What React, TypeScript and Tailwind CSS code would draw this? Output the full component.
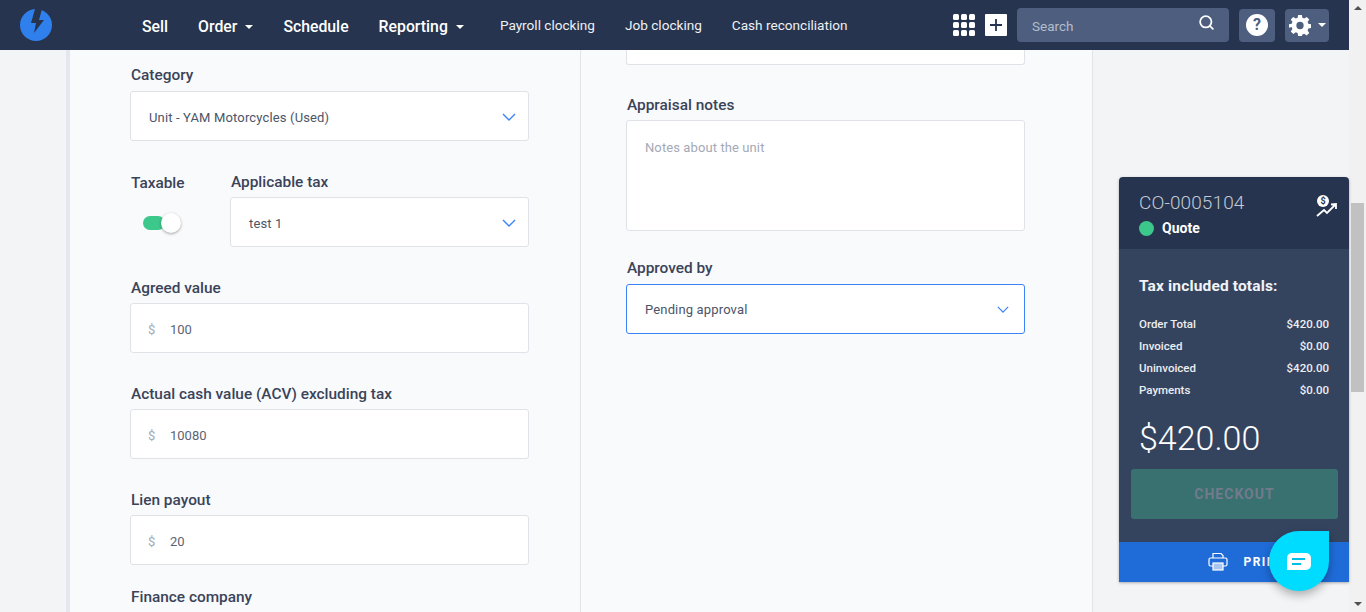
import React from "react";
import { Search } from "lucide-react";

const Caret = () => (
  <span className="ml-2 inline-block w-0 h-0 border-x-4 border-x-transparent border-t-4 border-t-white" />
);

const Label = ({ children }: { children: React.ReactNode }) => (
  <div className="h-5 leading-5 mb-[5px] pl-px text-[15.4px] font-medium text-[#3a4459] whitespace-nowrap">
    {children}
  </div>
);

const SelectBox = ({ value, focus }: { value: string; focus?: boolean }) => (
  <div
    className={`h-[50px] flex items-center justify-between pl-[18px] bg-white rounded-[3px] border ${
      focus ? "border-[#3b82f6] pr-[15px]" : "border-[#e0e2e8] pr-[12px]"
    }`}
  >
    <span className={`text-[13px] text-[#4b5568] tracking-[0.15px] ${focus ? "pt-[2px]" : "pt-[4px]"}`}>{value}</span>
    <svg
      viewBox="0 0 14 8"
      className={focus ? "w-[12px] h-[7px] shrink-0" : "w-[14px] h-[8px] mt-[2px] shrink-0"}
      fill="none"
      stroke="#3b82f6"
      strokeWidth="1.4"
    >
      <path d="M1 1l6 6 6-6" />
    </svg>
  </div>
);

const MoneyInput = ({ value }: { value: string }) => (
  <div className="h-[50px] flex items-center pl-[17px] pt-[4px] bg-white rounded-[3px] border border-[#e0e2e8] text-[13px]">
    <span className="w-[22px] text-[#a4a9b6]">$</span>
    <span className="text-[#5b6474]">{value}</span>
  </div>
);

const Row = ({ label, value }: { label: string; value: string }) => (
  <div className="h-[22px] flex items-center justify-between text-[11.5px] font-medium text-[#eceef2]">
    <span>{label}</span>
    <span>{value}</span>
  </div>
);

export default function App() {
  return (
    <div className="flex h-[612px] w-full overflow-hidden bg-[#f3f4f6] font-['Roboto',sans-serif]">
      <div className="flex-1 min-w-0 flex flex-col relative">
        {/* top nav */}
        <nav className="h-[50px] shrink-0 bg-[#26344f] flex items-center text-white">
          <svg viewBox="0 0 32 32" className="ml-[20px] w-8 h-8 shrink-0">
            <circle cx="16" cy="16" r="16" fill="#2f80ed" />
            <path d="M15 0 L22 0 L19 11 L24 11 L14 24 L16 14 L11 14 Z" fill="#26344f" />
          </svg>
          <div className="ml-[90px] pt-[4px] flex items-center text-[15.8px] font-medium">
            <span>Sell</span>
            <span className="ml-[30px] flex items-center">Order<Caret /></span>
            <span className="ml-[30px]">Schedule</span>
            <span className="ml-[30px] flex items-center">Reporting<Caret /></span>
          </div>
          <div className="ml-[36px] flex items-center gap-[30px] text-[13.6px] text-[#eef0f4]">
            <span>Payroll clocking</span>
            <span>Job clocking</span>
            <span>Cash reconciliation</span>
          </div>
          <div className="ml-auto mr-[20px] flex items-center">
            <div className="grid grid-cols-3 gap-[2px] w-[22px]">
              {[0, 1, 2, 3, 4, 5, 6, 7, 8].map((i) => (
                <span key={i} className="w-[6px] h-[6px] rounded-[1.5px] bg-white" />
              ))}
            </div>
            <div className="ml-[10px] w-[22px] h-[22px] bg-white rounded-[1px] flex items-center justify-center">
              <svg viewBox="0 0 14 14" className="w-[14px] h-[14px]">
                <path d="M7 1v12M1 7h12" stroke="#26344f" strokeWidth="1.8" />
              </svg>
            </div>
            <div className="ml-[10px] w-[212px] h-[34px] rounded-[4px] bg-[#4d5e7f] flex items-center justify-between pl-[15px] pr-[14px]">
              <span className="pt-[2px] text-[13.5px] text-[#b4bccb]">Search</span>
              <Search className="w-[17px] h-[17px] text-white -mt-[5px]" strokeWidth={2.5} />
            </div>
            <div className="ml-[10px] w-[36px] h-[33px] rounded-[4px] bg-[#4d5e7f] flex items-center justify-center">
              <span className="w-[22px] h-[22px] rounded-full bg-white flex items-center justify-center text-[16px] font-bold text-[#4d5e7f]">
                ?
              </span>
            </div>
            <div className="ml-[10px] w-[44px] h-[33px] rounded-[4px] bg-[#4d5e7f] flex items-center pl-[4px]">
              <svg viewBox="0 0 24 24" className="w-[22px] h-[22px]" fill="white">
                <path
                  fillRule="evenodd"
                  d="M10 1h4l.6 3.2 2 .8L19.3 3.2l2.8 2.8-1.8 2.7.8 2 3.2.6v4l-3.2.6-.8 2 1.8 2.7-2.8 2.8-2.7-1.8-2 .8L14 24h-4l-.6-3.2-2-.8-2.7 1.8-2.8-2.8 1.8-2.7-.8-2L0 15.100v-4l2.900-.6.8-2-1.800-2.500 2.800-2.800 2.700 1.800 2-.8z M12 8.500a4 4 0 1 0 0 8 4 4 0 0 0 0-8z"
                />
              </svg>
              <span className="ml-[7px] w-0 h-0 border-x-[4px] border-x-transparent border-t-[4px] border-t-white" />
            </div>
          </div>
        </nav>

        {/* body */}
        <div className="flex-1 min-h-0 flex">
          <div className="w-[66px] shrink-0" />
          <div className="w-[1027px] shrink-0 flex bg-[#f9fafc] border-l-4 border-l-[#e6e6f0] border-r border-r-[#e2e4e9]">
            <div className="w-[511px] shrink-0 pl-[60px] pr-[51px] pt-[15px] flex flex-col border-r border-r-[#e2e4e9]">
              <div>
                <div className="pb-px">
                  <Label>Category</Label>
                </div>
                <SelectBox value="Unit - YAM Motorcycles (Used)" />
              </div>
              <div className="flex mt-[31px]">
                <div className="w-[100px] shrink-0">
                  <div className="pt-[1px]">
                    <Label>Taxable</Label>
                  </div>
                  <div className="relative mt-[23px] ml-[13px] w-[22px] h-[14px] rounded-full bg-[#3cc88b]">
                    <span className="absolute -top-[3px] left-[18px] w-5 h-5 rounded-full bg-white shadow-[0_1px_3px_rgba(0,0,0,0.35)]" />
                  </div>
                </div>
                <div className="flex-1">
                  <Label>Applicable tax</Label>
                  <SelectBox value="test 1" />
                </div>
              </div>
              <div className="mt-[31px]">
                <Label>Agreed value</Label>
                <MoneyInput value="100" />
              </div>
              <div className="mt-[31px]">
                <Label>Actual cash value (ACV) excluding tax</Label>
                <MoneyInput value="10080" />
              </div>
              <div className="mt-[31px]">
                <Label>Lien payout</Label>
                <MoneyInput value="20" />
              </div>
              <div className="mt-[22px]">
                <Label>Finance company</Label>
              </div>
            </div>
            <div className="flex-1 pl-[45px] pr-[67px]">
              <div className="h-[15px] bg-white border border-t-0 border-[#e0e2e8] rounded-b-[3px]" />
              <div className="mt-[30px]">
                <Label>Appraisal notes</Label>
                <div className="h-[111px] bg-white border border-[#e0e2e8] rounded-[3px] px-[18px] pt-[18px] text-[13px] tracking-[0.1px] leading-[18px] text-[#a4a9b6]">
                  Notes about the unit
                </div>
              </div>
              <div className="mt-[27px]">
                <div className="pb-px">
                  <Label>Approved by</Label>
                </div>
                <SelectBox value="Pending approval" focus />
              </div>
            </div>
          </div>

          {/* order card */}
          <div className="ml-[26px] mt-[127px] w-[230px] h-[405px] shrink-0 flex flex-col rounded-t-[4px] overflow-hidden shadow-[0_1px_3px_rgba(0,0,0,0.3)]">
            <div className="h-[72px] shrink-0 bg-[#26344f] pl-[20px] pr-[11px] pt-[14px] flex justify-between">
              <div>
                <div className="text-[19px] leading-6 font-light text-[#c4c9d3] tracking-[0.1px]">CO-0005104</div>
                <div className="mt-[3px] flex items-center text-[14px] leading-5 font-bold text-white">
                  <span className="w-[15px] h-[15px] rounded-full bg-[#3cc88b] mr-[8px]" />
                  Quote
                </div>
              </div>
              <svg viewBox="0 0 22 22" className="w-[22px] h-[22px] mt-[4px]">
                <circle cx="7" cy="6" r="6" fill="white" />
                <text x="7" y="9" textAnchor="middle" fontSize="9" fontWeight="700" fill="#26344f">$</text>
                <path d="M1 21l7-6 3 3 8-8M15 9.500l5-.5v5" fill="none" stroke="white" strokeWidth="1.800" />
              </svg>
            </div>
            <div className="flex-1 bg-[#34445f] flex flex-col">
              <div className="px-[20px] pt-[27px]">
                <div className="text-[15.5px] tracking-[0.15px] leading-5 font-bold text-[#f2f3f6]">Tax included totals:</div>
                <div className="mt-[18px]">
                  <Row label="Order Total" value="$420.00" />
                  <Row label="Invoiced" value="$0.00" />
                  <Row label="Uninvoiced" value="$420.00" />
                  <Row label="Payments" value="$0.00" />
                </div>
                <div className="mt-[16px] text-[34px] leading-[40px] font-light text-white">$420.00</div>
              </div>
              <div className="ml-[12px] mr-[11px] mt-[11px] h-[50px] rounded-[3px] bg-[#38716f] flex items-center justify-center text-[14px] font-bold tracking-[1px] text-[#737a8c]">
                CHECKOUT
              </div>
              <div className="mt-auto h-[40px] bg-[#1f6cd9] flex items-center justify-center pl-[26px] text-white">
                <svg viewBox="0 0 20 20" className="w-5 h-5 mr-[15px] shrink-0" fill="none" stroke="white" strokeWidth="1.2">
                  <path d="M5 6V1.500h8l2 2V6" />
                  <rect x="1" y="6" width="18" height="8" rx="1.500" />
                  <rect x="5" y="11" width="10" height="7" fill="#a9c6f2" />
                </svg>
                <span className="text-[12px] font-bold tracking-[1.5px]">PRINT</span>
              </div>
            </div>
          </div>
        </div>

        {/* chat bubble */}
        <div className="absolute left-[1269px] top-[531px] w-[60px] h-[60px] rounded-full rounded-tr-[6px] bg-[#00dcff] flex items-center justify-center shadow-[0_4px_10px_rgba(0,0,0,0.3)]">
          <div className="w-6 h-[17px] rounded-[5px] rounded-bl-none bg-white flex flex-col justify-center gap-[3px] pl-[5px]">
            <span className="w-[13px] h-[2px] bg-[#00bfe6]" />
            <span className="w-[9px] h-[2px] bg-[#00bfe6]" />
          </div>
        </div>
      </div>

      {/* scrollbar */}
      <div className="w-[17px] shrink-0 bg-[#f1f1f1] flex flex-col items-center justify-between py-[6px]">
        <span className="w-0 h-0 border-x-4 border-x-transparent border-b-4 border-b-[#505050]" />
        <span className="w-0 h-0 border-x-4 border-x-transparent border-t-4 border-t-[#505050]" />
      </div>
      <div className="absolute left-[1351px] top-[203px] w-[13px] h-[189px] bg-[#c1c1c1]" />
    </div>
  );
}
